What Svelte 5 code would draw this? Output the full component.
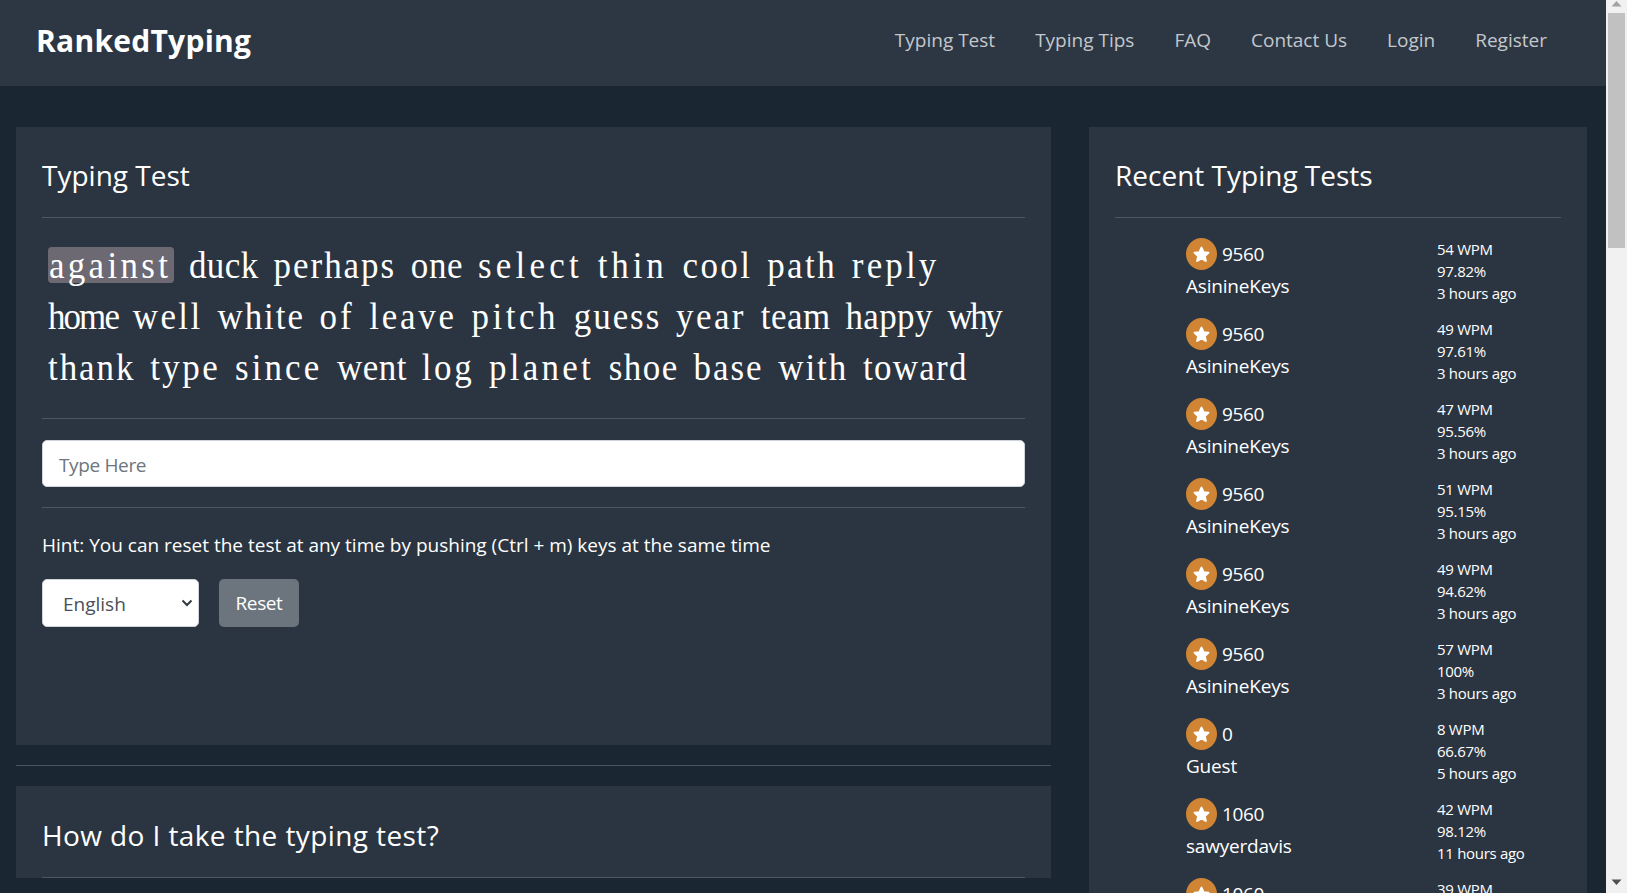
<script>
  const nav = ['Typing Test', 'Typing Tips', 'FAQ', 'Contact Us', 'Login', 'Register'];
  const lines = [
    ['against', 'duck', 'perhaps', 'one', 'select', 'thin', 'cool', 'path', 'reply'],
    ['home', 'well', 'white', 'of', 'leave', 'pitch', 'guess', 'year', 'team', 'happy', 'why'],
    ['thank', 'type', 'since', 'went', 'log', 'planet', 'shoe', 'base', 'with', 'toward']
  ];
  const tests = [
    [9560, 'AsinineKeys', 54, '97.82%', '3 hours ago'],
    [9560, 'AsinineKeys', 49, '97.61%', '3 hours ago'],
    [9560, 'AsinineKeys', 47, '95.56%', '3 hours ago'],
    [9560, 'AsinineKeys', 51, '95.15%', '3 hours ago'],
    [9560, 'AsinineKeys', 49, '94.62%', '3 hours ago'],
    [9560, 'AsinineKeys', 57, '100%', '3 hours ago'],
    [0, 'Guest', 8, '66.67%', '5 hours ago'],
    [1060, 'sawyerdavis', 42, '98.12%', '11 hours ago'],
    [1060, 'sawyerdavis', 39, '97.50%', '11 hours ago']
  ];

  // The word font is proportional; each word is tracked so that its letters take a fixed advance.
  const condense = 0.92;
  const advance = 17.5 / condense;
  const fontSize = 38;
  const widths = { a: 444, b: 500, c: 444, d: 500, e: 444, f: 333, g: 500, h: 500, i: 278, j: 278, k: 500, l: 278, m: 778, n: 500, o: 500, p: 500, q: 500, r: 333, s: 389, t: 278, u: 500, v: 500, w: 722, x: 500, y: 500, z: 444 };
  function tracking(word) {
    let natural = 0;
    for (const ch of word) natural += (widths[ch] * fontSize) / 1000;
    return (advance - natural / word.length).toFixed(2);
  }
</script>

<div class="window">
  <div class="viewport">
    <nav class="navbar">
      <a class="brand" href="#top">RankedTyping</a>
      <ul class="links">
        {#each nav as item}
          <li><a href="#top">{item}</a></li>
        {/each}
      </ul>
    </nav>

    <main class="columns">
      <section class="left">
        <div class="card test">
          <h3>Typing Test</h3>
          <hr />
          <div class="words">
            <div class="condensed">
              {#each lines as line, l}
                <div class="line">
                  {#each line as word, w}
                    <span class="word" class:current={l === 0 && w === 0} style="letter-spacing: {tracking(word)}px">{word}</span>{' '}
                  {/each}
                </div>
              {/each}
            </div>
          </div>
          <hr />
          <input class="type-input" type="text" placeholder="Type Here" />
          <hr />
          <p class="hint">Hint: You can reset the test at any time by pushing (Ctrl + m) keys at the same time</p>
          <div class="controls">
            <select class="lang">
              <option>English</option>
            </select>
            <button class="reset" type="button">Reset</button>
          </div>
        </div>
        <hr class="between" />
        <div class="card second">
          <h3>How do I take the typing test?</h3>
          <hr />
        </div>
      </section>

      <aside class="card recent">
        <h3>Recent Typing Tests</h3>
        <hr />
        <div class="list">
          {#each tests as t}
            <div class="row">
              <div class="who">
                <div class="rank">
                  <span class="medal">
                    <svg viewBox="0 0 32 32" width="21" height="21" aria-hidden="true">
                      <path d="M16 5.500l3.200 6.900 7.300.9-5.400 5.100 1.500 7.400L16 22.100 9.400 25.800l1.500-7.400-5.400-5.100 7.300-.9z" fill="#fff" stroke="#fff" stroke-width="3" stroke-linejoin="round" />
                    </svg>
                  </span>
                  <span class="score">{t[0]}</span>
                </div>
                <div class="name">{t[1]}</div>
              </div>
              <div class="stats">
                <div>{t[2]} WPM</div>
                <div>{t[3]}</div>
                <div>{t[4]}</div>
              </div>
            </div>
          {/each}
        </div>
      </aside>
    </main>
  </div>

  <div class="scrollbar" aria-hidden="true">
    <svg class="arrow" viewBox="0 0 21 8" width="21" height="8"><path d="M10.500 1L15.500 6.500H5.500z" fill="#a3a3a3" /></svg>
    <div class="thumb"></div>
    <svg class="arrow down" viewBox="0 0 21 8" width="21" height="8"><path d="M10.500 7L15.500 1.500H5.500z" fill="#505050" /></svg>
  </div>
</div>

<style>
  :global(body) {
    margin: 0;
    background: #1a2632;
  }
  .window {
    display: flex;
    height: 893px;
    overflow: hidden;
    font-family: "Open Sans", "Noto Sans", sans-serif;
    color: #fff;
    background: #1a2632;
  }
  .viewport {
    flex: 1;
    min-width: 0;
  }
  .navbar {
    height: 86px;
    box-sizing: border-box;
    display: flex;
    align-items: center;
    justify-content: space-between;
    padding: 0 59px 6px 36px;
    background: #2d3743;
  }
  .brand {
    font-size: 30px;
    font-weight: 700;
    letter-spacing: 0.25px;
    color: #fff;
    text-decoration: none;
  }
  .links {
    display: flex;
    gap: 40px;
    list-style: none;
    margin: 0;
    padding: 0;
  }
  .links a {
    font-size: 19px;
    color: #c4c8cc;
    text-decoration: none;
  }
  .columns {
    display: grid;
    grid-template-columns: 1035px 498px;
    column-gap: 38px;
    padding: 41px 0 0 16px;
    align-items: start;
  }
  .card {
    background: #2b3541;
    padding: 0 26px;
    box-sizing: border-box;
  }
  .test {
    height: 618px;
  }
  h3 {
    margin: 0;
    height: 90px;
    box-sizing: border-box;
    padding-top: 29px;
    font-size: 28px;
    line-height: 38px;
    font-weight: 400;
  }
  .second h3 {
    height: 91px;
    padding-top: 30px;
    letter-spacing: 0.4px;
  }
  hr {
    border: 0;
    height: 1px;
    margin: 0;
    background: #4d5762;
  }
  .between {
    margin: 20px 0;
    background: #4a5560;
  }
  .words {
    padding: 22px 0 25px 6px;
    font-family: "Liberation Serif", serif;
    font-size: 38px;
    font-kerning: none;
    line-height: 51px;
    word-spacing: 6.500px;
    white-space: nowrap;
  }
  .condensed {
    transform: scaleX(0.92);
    transform-origin: left center;
  }
  .current {
    display: inline-block;
    height: 36px;
    box-sizing: border-box;
    line-height: 36px;
    padding: 0 3px 0 1px;
    border-radius: 4px;
    background: #6c6973;
  }
  .type-input {
    display: block;
    width: 100%;
    height: 47px;
    box-sizing: border-box;
    margin: 21px 0 20px;
    padding: 2px 16px 0;
    border: 1px solid #ced4da;
    border-radius: 5px;
    background: #fff;
    font: inherit;
    font-size: 19px;
    letter-spacing: -0.35px;
    outline: none;
  }
  .type-input::placeholder {
    color: #6c757d;
    opacity: 1;
  }
  .hint {
    margin: 0;
    padding-top: 24px;
    font-size: 19px;
    line-height: 26px;
  }
  .controls {
    display: flex;
    gap: 20px;
    margin-top: 21px;
  }
  .lang {
    appearance: none;
    width: 157px;
    height: 48px;
    box-sizing: border-box;
    padding: 2px 0 0 20px;
    border: 1px solid #ced4da;
    border-radius: 5px;
    font: inherit;
    font-size: 19px;
    color: #495057;
    background: #fff url("data:image/svg+xml,%3Csvg xmlns='http://www.w3.org/2000/svg' width='12' height='8' viewBox='0 0 12 8'%3E%3Cpath d='M1.500 1.500L6 6l4.500-4.500' fill='none' stroke='%23343a40' stroke-width='2'/%3E%3C/svg%3E") no-repeat right 5px center;
  }
  .reset {
    width: 80px;
    height: 48px;
    padding: 0;
    border: 0;
    border-radius: 5px;
    background: #6c757d;
    color: #fff;
    font: inherit;
    font-size: 19px;
    letter-spacing: -0.4px;
  }
  .list {
    padding-top: 20px;
  }
  .row {
    display: grid;
    grid-template-columns: 251px 1fr;
    height: 80px;
    padding-left: 71px;
  }
  .rank {
    display: flex;
    align-items: center;
    gap: 5px;
    height: 32px;
  }
  .medal {
    width: 31px;
    height: 32px;
    border-radius: 50%;
    background: #d08535;
    display: flex;
    align-items: center;
    justify-content: center;
  }
  .score {
    font-size: 19px;
    letter-spacing: -0.4px;
  }
  .name {
    font-size: 19px;
    letter-spacing: -0.2px;
    line-height: 33px;
  }
  .stats {
    font-size: 15px;
    line-height: 22px;
    letter-spacing: -0.3px;
    margin-top: 0;
  }
  .scrollbar {
    width: 21px;
    height: 893px;
    flex: none;
    background: #f1f1f1;
    display: flex;
    flex-direction: column;
    align-items: center;
  }
  .arrow {
    flex: none;
  }
  .thumb {
    width: 17px;
    height: 235px;
    margin-top: 5px;
    background: #c1c1c1;
  }
  .down {
    margin-top: auto;
    margin-bottom: 7px;
  }
</style>
